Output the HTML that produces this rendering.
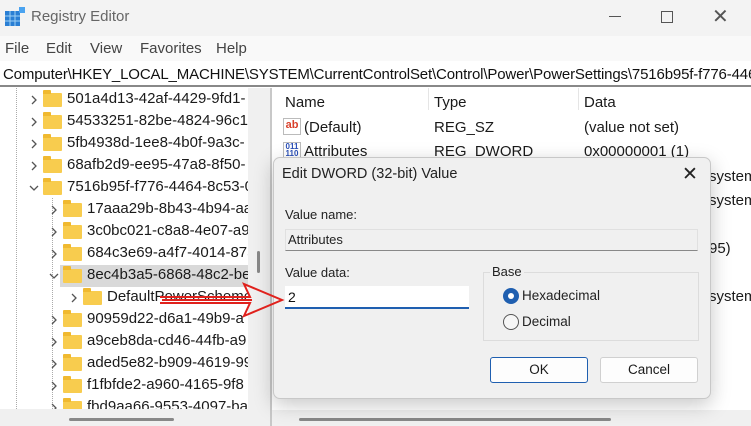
<!DOCTYPE html>
<html><head><style>
*{margin:0;padding:0;box-sizing:border-box}
body{width:751px;height:426px;overflow:hidden;background:#fff;font-family:"Liberation Sans",sans-serif;color:#1a1a1a;position:relative}
.abs{position:absolute;white-space:nowrap}
.t{font-size:15px}
.fold{position:absolute;width:19px;height:14px;background:#f8cc4e;border-radius:1px}
.fold:before{content:"";position:absolute;left:0;top:-3px;width:8px;height:4px;background:#f0b930;border-radius:1px 1px 0 0}
.chev{position:absolute}
</style></head><body>
<!-- title bar -->
<div class="abs" style="left:0;top:0;width:751px;height:36px;background:#f3f3f3"></div>
<svg class="abs" style="left:5px;top:7px" width="20" height="20"><rect x="0" y="4" width="15" height="15" fill="#2a7fd4"/><path d="M5 4v15M10 4v15M0 9h15M0 14h15" stroke="#9fd0f5" stroke-width="1"/><rect x="14" y="0" width="6" height="6" fill="#4aa3f0"/></svg>
<div class="abs" style="left:31px;top:8px;font-size:15px;color:#666">Registry Editor</div>
<div class="abs" style="left:609px;top:16px;width:12px;height:1px;background:#555"></div>
<div class="abs" style="left:661px;top:11px;width:12px;height:12px;border:1px solid #555"></div>
<div class="abs" style="left:712px;top:4px;font-size:20px;color:#555;font-weight:300">✕</div>
<!-- menu -->
<div class="abs" style="left:0;top:36px;width:751px;height:25px;background:#f9f9f9"></div>
<div class="abs t" style="left:5px;top:40px;color:#444">File</div>
<div class="abs t" style="left:46px;top:40px;color:#444">Edit</div>
<div class="abs t" style="left:90px;top:40px;color:#444">View</div>
<div class="abs t" style="left:140px;top:40px;color:#444">Favorites</div>
<div class="abs t" style="left:216px;top:40px;color:#444">Help</div>
<!-- address -->
<div class="abs" style="left:0;top:61px;width:751px;height:26px;background:#fff;border-bottom:2px solid #888"></div>
<div class="abs t" style="left:3px;top:66px;color:#111;letter-spacing:-0.15px">Computer\HKEY_LOCAL_MACHINE\SYSTEM\CurrentControlSet\Control\Power\PowerSettings\7516b95f-f776-4464</div>
<!-- tree -->
<div class="abs" style="left:0;top:88px;width:248px;height:321px;overflow:hidden">
<div class="abs" style="left:60px;top:177px;width:188px;height:22px;background:#d9d9d9"></div>
<div class="abs" style="left:16px;top:0;width:1px;height:321px;border-left:1px dotted #aaa"></div>
<div class="abs" style="left:52px;top:110px;width:1px;height:211px;border-left:1px dotted #aaa"></div>
<div id="tree"></div>
</div>
<div class="abs" style="left:248px;top:88px;width:22px;height:338px;background:#f0f0f0"></div>
<div class="abs" style="left:257px;top:251px;width:3px;height:22px;background:#888;border-radius:2px"></div>
<div class="abs" style="left:270px;top:88px;width:2px;height:338px;background:#c8c8c8"></div>
<div class="abs" style="left:0;top:409px;width:248px;height:17px;background:#f0f0f0"></div>
<div class="abs" style="left:69px;top:418px;width:105px;height:3px;background:#888;border-radius:2px"></div>
<!-- right list -->
<div class="abs t" style="left:285px;top:94px">Name</div>
<div class="abs" style="left:428px;top:88px;width:1px;height:22px;background:#e5e5e5"></div>
<div class="abs t" style="left:434px;top:94px">Type</div>
<div class="abs" style="left:578px;top:88px;width:1px;height:22px;background:#e5e5e5"></div>
<div class="abs t" style="left:584px;top:94px">Data</div>
<div class="abs" style="left:283px;top:118px;width:18px;height:17px;background:#fff;border:1px solid #bbb;font-size:11px;font-weight:bold;color:#d9402b;line-height:13px;text-align:center">ab</div>
<div class="abs t" style="left:304px;top:119px">(Default)</div>
<div class="abs t" style="left:434px;top:119px">REG_SZ</div>
<div class="abs t" style="left:584px;top:119px">(value not set)</div>
<div class="abs" style="left:283px;top:142px;width:18px;height:17px;background:#fff;border:1px solid #bbb;font-size:8px;font-weight:bold;color:#2a4fb8;line-height:7px;text-align:center">011<br>110</div>
<div class="abs t" style="left:304px;top:143px">Attributes</div>
<div class="abs t" style="left:434px;top:143px">REG_DWORD</div>
<div class="abs t" style="left:584px;top:143px">0x00000001 (1)</div>
<div class="abs t" style="left:709px;top:168px">system</div>
<div class="abs t" style="left:709px;top:192px">system</div>
<div class="abs t" style="left:709px;top:240px">95)</div>
<div class="abs t" style="left:709px;top:288px">system</div>
<div class="abs" style="left:272px;top:410px;width:479px;height:16px;background:#f0f0f0"></div>
<div class="abs" style="left:299px;top:418px;width:312px;height:3px;background:#888;border-radius:2px"></div>
<!-- dialog -->
<div class="abs" style="left:273px;top:157px;width:438px;height:242px;background:#f0f0f0;border:1px solid #c8c8c8;border-radius:7px;box-shadow:0 6px 20px rgba(0,0,0,0.22)"></div>
<div class="abs" style="left:282px;top:166px;font-size:14.5px;color:#222">Edit DWORD (32-bit) Value</div>
<div class="abs" style="left:682px;top:163px;font-size:19px;color:#222">✕</div>
<div class="abs" style="left:285px;top:207px;font-size:13px;color:#222">Value name:</div>
<div class="abs" style="left:285px;top:229px;width:413px;height:22px;background:#f0f0f0;border:1px solid #e0e0e0;border-bottom:1px solid #888"></div>
<div class="abs" style="left:288px;top:232px;font-size:13px;color:#222">Attributes</div>
<div class="abs" style="left:285px;top:265px;font-size:13px;color:#222">Value data:</div>
<div class="abs" style="left:285px;top:286px;width:184px;height:23px;background:#fff;border-bottom:2px solid #1f5fb0"></div>
<div class="abs" style="left:288px;top:289px;font-size:14px;color:#111">2</div>
<div class="abs" style="left:483px;top:272px;width:216px;height:69px;border:1px solid #dcdcdc"></div>
<div class="abs" style="left:490px;top:264px;font-size:13px;color:#222;background:#f0f0f0;padding:0 2px">Base</div>
<div class="abs" style="left:503px;top:288px;width:16px;height:16px;border-radius:50%;background:#1f5fb0"></div>
<div class="abs" style="left:508px;top:293px;width:6px;height:6px;border-radius:50%;background:#fff"></div>
<div class="abs" style="left:522px;top:288px;font-size:13.5px;color:#222">Hexadecimal</div>
<div class="abs" style="left:503px;top:314px;width:16px;height:16px;border-radius:50%;border:1px solid #555;background:#f6f6f6"></div>
<div class="abs" style="left:522px;top:314px;font-size:13.5px;color:#222">Decimal</div>
<div class="abs" style="left:490px;top:357px;width:98px;height:26px;background:#fdfdfd;border:1px solid #1f5fb0;border-radius:3px;font-size:13.5px;text-align:center;line-height:24px">OK</div>
<div class="abs" style="left:600px;top:357px;width:98px;height:26px;background:#fdfdfd;border:1px solid #d0d0d0;border-radius:3px;font-size:13.5px;text-align:center;line-height:24px">Cancel</div>
<!-- arrow -->
<svg class="abs" style="left:150px;top:278px" width="140" height="48"><path d="M10 19 L100 19 L94 6 L132 22 L94 38 L100 25 L10 25" fill="none" stroke="#e0211c" stroke-width="2"/><path d="M12 21 L102 21 L102 23 L12 23Z" fill="#e0211c"/></svg>
<script>
var rows=[[1,"501a4d13-42af-4429-9fd1-"],[1,"54533251-82be-4824-96c1-"],[1,"5fb4938d-1ee8-4b0f-9a3c-"],[1,"68afb2d9-ee95-47a8-8f50-"],[1,"7516b95f-f776-4464-8c53-0",1],[2,"17aaa29b-8b43-4b94-aa"],[2,"3c0bc021-c8a8-4e07-a9"],[2,"684c3e69-a4f7-4014-875"],[2,"8ec4b3a5-6868-48c2-be",1],[3,"DefaultPowerScheme"],[2,"90959d22-d6a1-49b9-a"],[2,"a9ceb8da-cd46-44fb-a9"],[2,"aded5e82-b909-4619-99"],[2,"f1fbfde2-a960-4165-9f8"],[2,"fbd9aa66-9553-4097-ba"]];
var h="";rows.forEach(function(r,i){var y=i*22;var x=[0,28,48,68][r[0]];
var p=r[2]?'M1 3 L5 7 L9 3':'M3 1 L7 5 L3 9';
h+='<svg class="chev" style="left:'+(x+1)+'px;top:'+(y+7)+'px" width="10" height="10"><path d="'+p+'" fill="none" stroke="#555" stroke-width="1.3"/></svg>';
h+='<div class="fold" style="left:'+(x+15)+'px;top:'+(y+5)+'px"></div>';
h+='<div class="abs t" style="left:'+(x+39)+'px;top:'+(y+2)+'px;width:'+(248-x-39)+'px;overflow:hidden">'+r[1]+'</div>';});
document.getElementById("tree").innerHTML=h;
</script>
</body></html>
